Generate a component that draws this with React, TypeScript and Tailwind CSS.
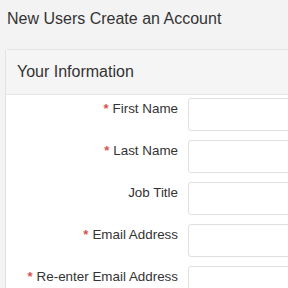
const fields = [
  { label: 'First Name', required: true },
  { label: 'Last Name', required: true },
  { label: 'Job Title', required: false },
  { label: 'Email Address', required: true },
  { label: 'Re-enter Email Address', required: true },
];

export default function App() {
  return (
    <div className="w-[288px] h-[288px] overflow-hidden bg-[#f3f3f3] text-[#333] font-['Liberation_Sans',Arial,sans-serif]">
      {/* page title */}
      <div className="h-[49px] pl-[7px] pt-[10px] text-[16px] leading-[18px]">
        New Users Create an Account
      </div>

      {/* panel */}
      <div className="ml-[5px] w-[320px] border border-[#e2e2e2] rounded-tl-[3px] bg-white">
        <div className="h-[45px] bg-[#f5f5f5] border-b border-[#e6e6e6] pl-[11px] flex items-center text-[16px]">
          Your Information
        </div>
        <div className="pt-[3px] flex flex-col gap-[9px]">
          {fields.map((f) => (
            <div key={f.label} className="flex">
              <label className="w-[182px] shrink-0 text-right pr-[10px] pt-[2px] text-[13.4px] leading-[18px]">
                {f.required && <span className="text-[#d9534f] text-[13px] font-bold mr-[4px]">*</span>}
                {f.label}
              </label>
              <input
                type="text"
                className="h-[33px] w-[140px] border border-[#e0e0e0] rounded-[3px] bg-white"
              />
            </div>
          ))}
        </div>
      </div>
    </div>
  );
}
